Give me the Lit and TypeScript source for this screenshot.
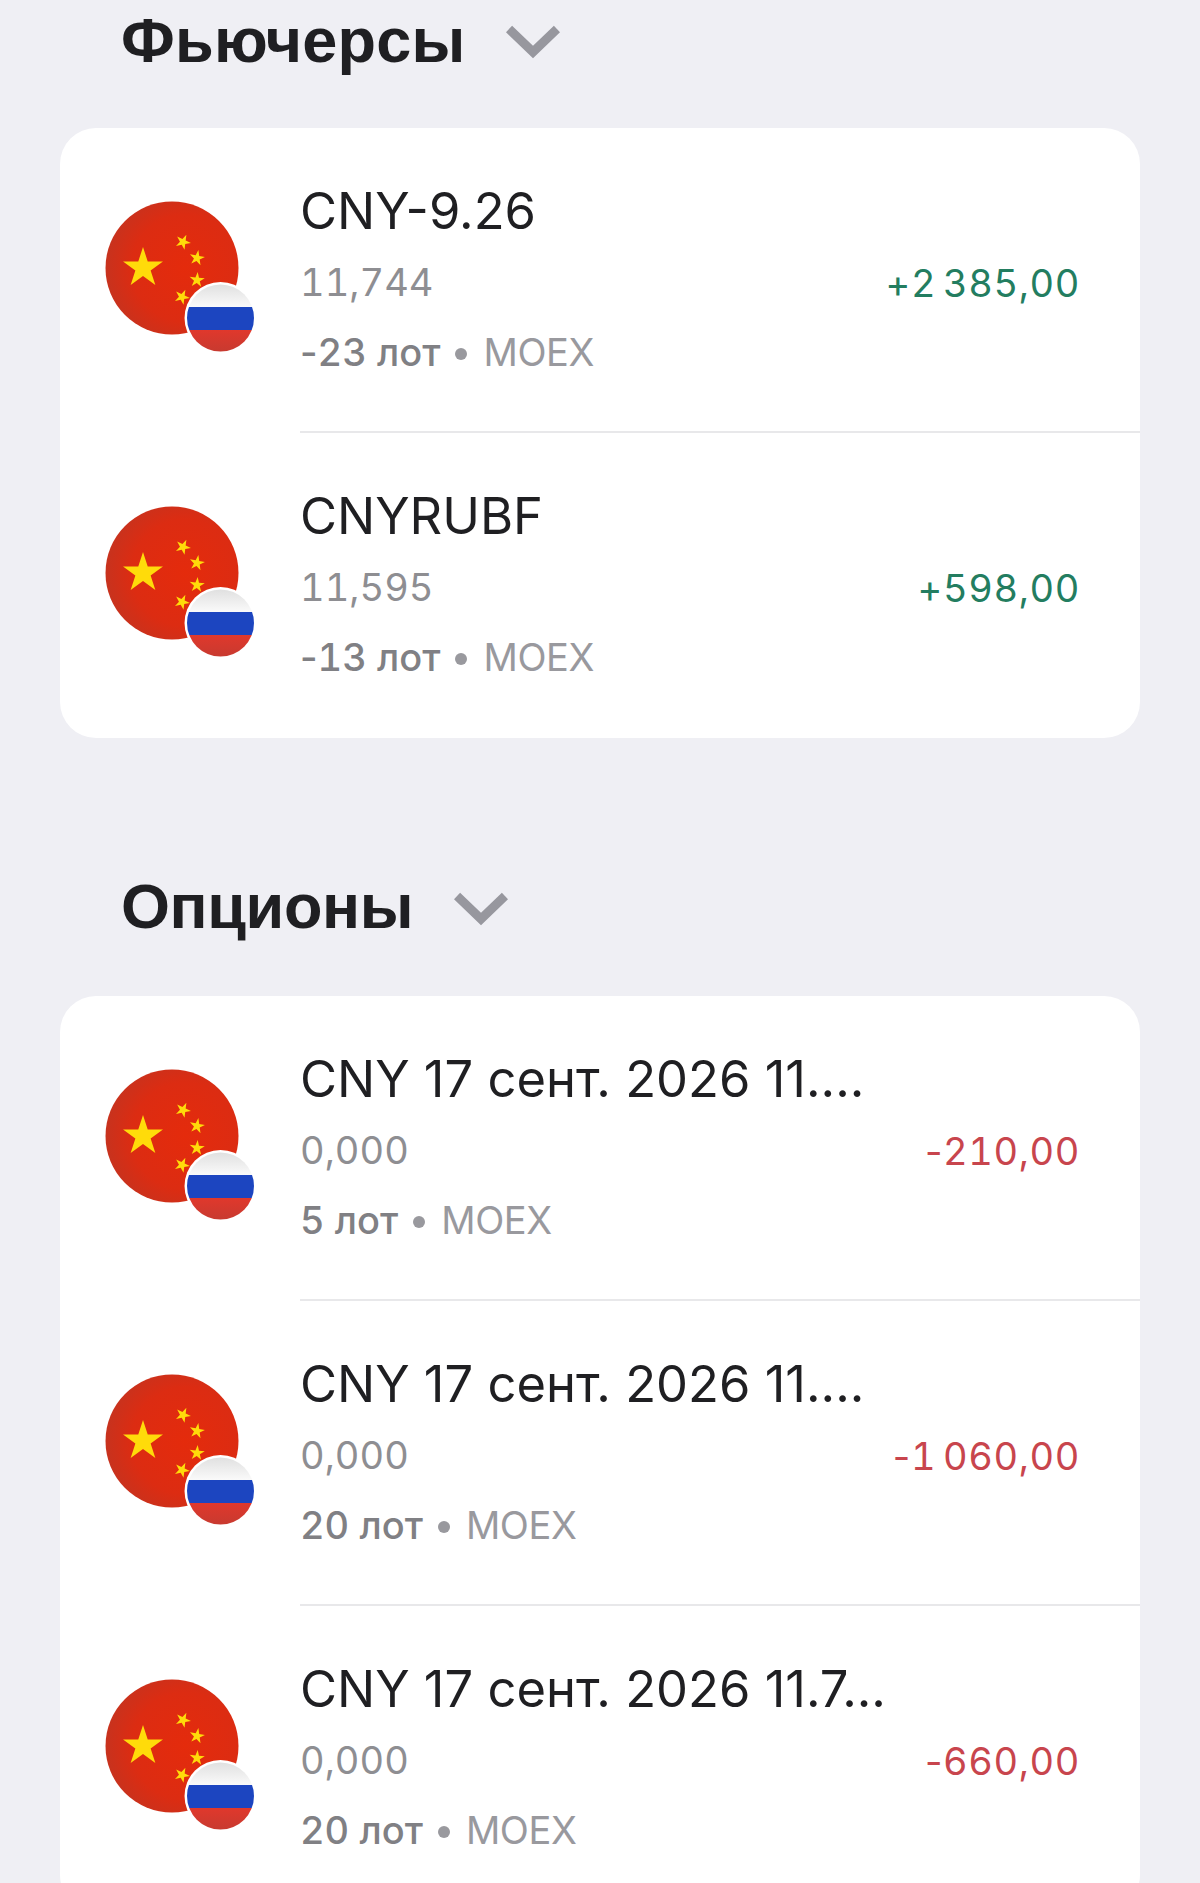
import { LitElement, html, css, svg } from "lit";
import { customElement } from "lit/decorators.js";

const star = (cx: number, cy: number, r: number, rot: number) => {
  const pts: string[] = [];
  for (let i = 0; i < 10; i++) {
    const rad = i % 2 === 0 ? r : r * 0.382;
    const a = ((-90 + rot + i * 36) * Math.PI) / 180;
    pts.push(`${(cx + rad * Math.cos(a)).toFixed(2)},${(cy + rad * Math.sin(a)).toFixed(2)}`);
  }
  return svg`<polygon points=${pts.join(" ")} fill="#ffdb0a"/>`;
};

const flagIcon = (id: string) => html`<svg class="flag" viewBox="0 0 160 160" width="160" height="160">
  <defs>
    <radialGradient id="cn${id}" cx="0.6" cy="0.5" r="0.62">
      <stop offset="0" stop-color="#e42b0c"/><stop offset="0.65" stop-color="#dc2c12"/><stop offset="1" stop-color="#c5331f"/>
    </radialGradient>
    <clipPath id="ru${id}"><circle cx="119.5" cy="117" r="33.5"/></clipPath>
    <linearGradient id="wh${id}" x1="0" y1="0" x2="0" y2="1">
      <stop offset="0" stop-color="#dcdcdc"/><stop offset="1" stop-color="#fafafa"/>
    </linearGradient>
    <linearGradient id="rd${id}" x1="0" y1="0" x2="0" y2="1">
      <stop offset="0" stop-color="#e0382c"/><stop offset="1" stop-color="#c53a30"/>
    </linearGradient>
  </defs>
  <circle cx="71" cy="67" r="66.5" fill="url(#cn${id})"/>
  ${star(42, 67, 21, 0)}
  ${star(82, 41, 8, 25)}
  ${star(96, 57, 8, 10)}
  ${star(96, 79, 8, 5)}
  ${star(81, 96, 8, 25)}
  <circle cx="119.5" cy="117" r="36" fill="#fff"/>
  <g clip-path="url(#ru${id})">
    <rect x="82" y="80" width="76" height="26" fill="url(#wh${id})"/>
    <rect x="82" y="106" width="76" height="23" fill="#1c45c0"/>
    <rect x="82" y="129" width="76" height="24" fill="url(#rd${id})"/>
  </g>
</svg>`;

interface Row { name: string; price: string; sign: string; lots: string; psign: string; pnl: string; up: boolean; }

const futures: Row[] = [
  { name: "CNY-9.26", price: "11,744", sign: "-", lots: "23 лот", psign: "+", pnl: "2 385,00", up: true },
  { name: "CNYRUBF", price: "11,595", sign: "-", lots: "13 лот", psign: "+", pnl: "598,00", up: true },
];
const options: Row[] = [
  { name: "CNY 17 сент. 2026 11....", price: "0,000", sign: "", lots: "5 лот", psign: "-", pnl: "210,00", up: false },
  { name: "CNY 17 сент. 2026 11....", price: "0,000", sign: "", lots: "20 лот", psign: "-", pnl: "1 060,00", up: false },
  { name: "CNY 17 сент. 2026 11.7...", price: "0,000", sign: "", lots: "20 лот", psign: "-", pnl: "660,00", up: false },
];

@customElement("app-root")
export class AppRoot extends LitElement {
  static styles = css`
    :host { display: block; width: 1200px; height: 1883px; overflow: hidden; background: #efeff4; font-family: Inter, "Liberation Sans", sans-serif; }
    .head { display: flex; padding-left: 121px; gap: 41px; align-items: flex-start; }
    .head h2 { margin: 0; font: 700 63px/82px "Liberation Sans", sans-serif; color: #1f1f22; }
    .top { height: 128px; }
    .top h2 { letter-spacing: 0.2px; line-height: 80px; }
    .second { height: 258px; box-sizing: border-box; padding-top: 127px; }
    .second h2 { letter-spacing: -0.4px; }
    .second .chev { margin-top: 26px; }
    .chev { display: block; margin-top: 24px; }
    .card { margin: 0 60px; background: #fff; border-radius: 36px; overflow: hidden; }
    .row { display: flex; height: 305px; box-sizing: border-box; }
    .icon { width: 240px; flex: none; padding: 73px 0 0 41px; box-sizing: border-box; }
    .flag { display: block; }
    .body { flex: 1; display: flex; border-bottom: 2px solid #e8e8ea; padding-right: 60px; justify-content: space-between; }
    .row:last-child .body { border-bottom: none; }
    .text { padding-top: 53px; }
    .name { font-size: 50.7px; line-height: 60px; color: #1f1f22; white-space: nowrap; }
    .price { font-size: 38px; line-height: 46px; margin-top: 18px; color: #8e8e92; font-variant-numeric: tabular-nums; }
    .meta { font-size: 38px; line-height: 46px; margin-top: 24px; color: #99999e; white-space: nowrap; display: flex; align-items: center; }
    .lots { color: #808084; font-weight: 500; white-space: pre; }
    .lots b { font-weight: 500; font-variant-numeric: tabular-nums; }
    .dot { width: 12px; height: 12px; border-radius: 50%; background: #99999e; margin: 4px 16px 0 15px; }
    .ex { letter-spacing: -0.4px; }
    .pnl { font-size: 38px; line-height: 46px; padding-top: 132px; white-space: nowrap; letter-spacing: 0.6px; word-spacing: -4px; }
    .pnl b { font-weight: 400; font-variant-numeric: tabular-nums; }
    .up { color: #237d60; }
    .down { color: #c8454d; }
  `;

  private chevron() {
    return html`<svg class="chev" width="54" height="36" viewBox="0 0 54 36"><path d="M3 5 L27 28 L51 5" fill="none" stroke="#97979e" stroke-width="9"/></svg>`;
  }

  private row(r: Row, id: string) {
    return html`<div class="row">
      <div class="icon">${flagIcon(id)}</div>
      <div class="body">
        <div class="text">
          <div class="name">${r.name}</div>
          <div class="price">${r.price}</div>
          <div class="meta"><span class="lots">${r.sign}<b>${r.lots}</b></span><span class="dot"></span><span class="ex">MOEX</span></div>
        </div>
        <div class="pnl ${r.up ? "up" : "down"}">${r.psign}<b>${r.pnl}</b></div>
      </div>
    </div>`;
  }

  render() {
    return html`
      <div class="head top"><h2>Фьючерсы</h2>${this.chevron()}</div>
      <div class="card">${futures.map((r, i) => this.row(r, "f" + i))}</div>
      <div class="head second"><h2>Опционы</h2>${this.chevron()}</div>
      <div class="card">${options.map((r, i) => this.row(r, "o" + i))}</div>
    `;
  }
}
